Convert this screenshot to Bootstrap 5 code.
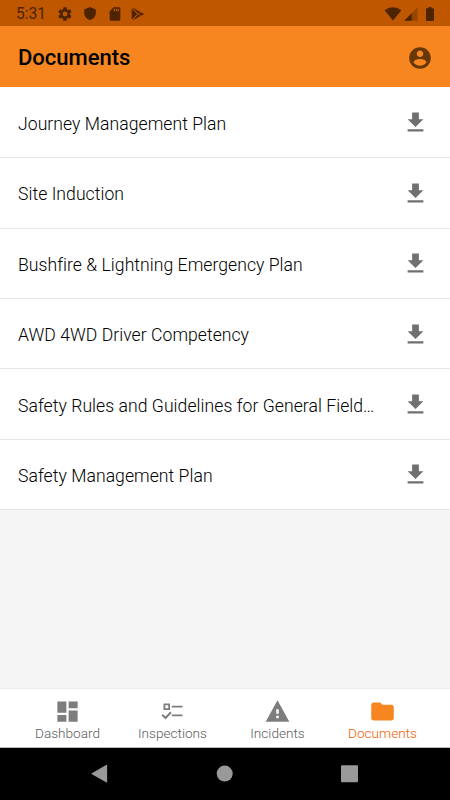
<!DOCTYPE html>
<html lang="en">
<head>
<meta charset="utf-8">
<meta name="viewport" content="width=device-width, initial-scale=1">
<title>Documents</title>
<link href="https://cdn.jsdelivr.net/npm/bootstrap@5.3.0/dist/css/bootstrap.min.css" rel="stylesheet">
<style>
body{font-family:Roboto,"Liberation Sans",sans-serif;background:#f5f5f5;color:#000}
svg{display:block;flex:none;fill:currentColor}
.status-bar{height:26px;background:#bf5600;color:#4d2300;padding:1px 16px 0 16px}
.clock{width:41px;font-size:15.6px;padding-top:2px}
.status-icons{gap:10px}
.play{margin-left:-2px}
.signal{margin:0 8px 0 2px}
.app-bar{height:61px;background:#f78620;padding:2px 17px 0 18px}
.app-title{font-size:22px;font-weight:500;line-height:24px;padding-top:1px}
.account{color:#673705}
.doc-row{height:70.4px;padding:1px 21px 0 18px;border-bottom:1px solid #e6e6e6;background:#fff}
.doc-row:first-child{height:71.2px}
.doc-name{font-size:17.6px;line-height:24px;font-weight:300;letter-spacing:.04px;color:#000;padding-top:2px}
.doc-row svg{color:#707070}
.tab-bar{height:60px;background:#fff;border-top:1px solid #ececec;border-bottom:1px solid #bdbdbd;padding:0 15px}
.tab-item{color:#7d7d7d;font-size:13.6px;line-height:16px;padding-top:9px;text-decoration:none;font-weight:300}
.tab-item span{color:#5c5c5c}
.tab-item.current{color:#f78620}
.tab-item.current span{color:#f26000}
.system-bar{height:52px;background:#000;color:#999}
</style>
<script src="https://cdn.jsdelivr.net/npm/bootstrap@5.3.0/dist/js/bootstrap.bundle.min.js"></script>
</head>
<body>
<div class="d-flex flex-column vh-100 overflow-hidden">
  <div class="status-bar d-flex align-items-center justify-content-between flex-shrink-0">
    <div class="d-flex align-items-center">
      <span class="clock">5:31</span>
      <div class="status-icons d-flex align-items-center">
      <svg width="16" height="16" viewBox="0 0 24 24"><path d="M19.400 13c.1-.7.1-1.300 0-2l2.100-1.600c.2-.2.3-.4.100-.7l-2-3.400c-.1-.2-.4-.3-.6-.2l-2.500 1c-.5-.4-1.100-.7-1.700-1l-.4-2.600c0-.2-.2-.5-.5-.5h-4c-.3 0-.5.2-.5.500L9 5.100c-.6.3-1.200.6-1.700 1l-2.500-1c-.2-.1-.5 0-.6.200l-2 3.400c-.1.300-.1.500.1.700L4.500 11c-.1.700-.1 1.300 0 2l-2.200 1.600c-.2.200-.2.400-.1.700l2 3.400c.1.200.4.300.6.200l2.500-1c.5.400 1.100.7 1.700 1l.4 2.600c0 .3.200.5.500.5h4c.3 0 .5-.2.500-.5l.4-2.600c.6-.3 1.200-.6 1.700-1l2.500 1c.2.100.5 0 .6-.2l2-3.400c.2-.3.1-.5-.1-.7zM12 15.600a3.600 3.600 0 1 1 0-7.200 3.600 3.600 0 0 1 0 7.200z"/></svg>
      <svg width="14" height="15" viewBox="0 0 24 24"><path d="M12 1 2 5v6c0 5.550 4.200 10.740 10 12 5.800-1.260 10-6.450 10-12V5z"/></svg>
      <svg width="16" height="16" viewBox="0 0 24 24"><path d="M18 2h-8L4 8v12c0 1.100.9 2 2 2h12c1.100 0 2-.9 2-2V4c0-1.100-.9-2-2-2zm-6 6h-2V4h2zm3 0h-2V4h2zm3 0h-2V4h2z"/></svg>
      <svg class="play" width="14" height="14" viewBox="0 0 14 14"><path d="M.7 1.200 6.200 7 .7 12.800zM1.600.6 9.400 4.900 7.200 6.700zM7.200 7.300 9.400 9.100 1.600 13.400zM10 5.300 13.200 7 10 8.700 7.900 7z"/></svg>
      </div>
    </div>
    <div class="d-flex align-items-center">
      <svg width="18" height="14" viewBox="0 0 18 14"><path d="M.6 3.300Q9-3 17.400 3.300L9 13.500z"/></svg>
      <svg class="signal" width="14" height="14" viewBox="0 0 14 14"><path opacity=".35" d="M.3 13.700 13.500.5v13.200z"/><path d="M.3 13.700 7.700 6.300v7.400z"/></svg>
      <svg width="8" height="14" viewBox="0 0 8 14"><path d="M2.500 0h3v1.300H7q1 0 1 1V13q0 1-1 1H1q-1 0-1-1V2.300q0-1 1-1h1.500z"/></svg>
    </div>
  </div>
  <header class="app-bar d-flex align-items-center justify-content-between flex-shrink-0">
    <h1 class="app-title mb-0">Documents</h1>
    <svg class="account" width="26" height="26" viewBox="0 0 24 24"><path d="M12 2C6.480 2 2 6.480 2 12s4.480 10 10 10 10-4.480 10-10S17.520 2 12 2zm0 3c1.660 0 3 1.340 3 3s-1.340 3-3 3-3-1.340-3-3 1.340-3 3-3zm0 14.200c-2.500 0-4.710-1.280-6-3.220.03-1.990 4-3.080 6-3.080 1.990 0 5.970 1.090 6 3.080-1.290 1.940-3.500 3.220-6 3.220z"/></svg>
  </header>
  <main class="flex-grow-1">
    <div class="doc-row d-flex align-items-center justify-content-between"><span class="doc-name text-truncate">Journey Management Plan</span><svg width="27" height="27" viewBox="0 0 24 24"><path d="M19 9h-4V3H9v6H5l7 7 7-7zM5 18v2h14v-2H5z"/></svg></div>
    <div class="doc-row d-flex align-items-center justify-content-between"><span class="doc-name text-truncate">Site Induction</span><svg width="27" height="27" viewBox="0 0 24 24"><path d="M19 9h-4V3H9v6H5l7 7 7-7zM5 18v2h14v-2H5z"/></svg></div>
    <div class="doc-row d-flex align-items-center justify-content-between"><span class="doc-name text-truncate">Bushfire &amp; Lightning Emergency Plan</span><svg width="27" height="27" viewBox="0 0 24 24"><path d="M19 9h-4V3H9v6H5l7 7 7-7zM5 18v2h14v-2H5z"/></svg></div>
    <div class="doc-row d-flex align-items-center justify-content-between"><span class="doc-name text-truncate">AWD 4WD Driver Competency</span><svg width="27" height="27" viewBox="0 0 24 24"><path d="M19 9h-4V3H9v6H5l7 7 7-7zM5 18v2h14v-2H5z"/></svg></div>
    <div class="doc-row d-flex align-items-center justify-content-between"><span class="doc-name text-truncate">Safety Rules and Guidelines for General Field…</span><svg width="27" height="27" viewBox="0 0 24 24"><path d="M19 9h-4V3H9v6H5l7 7 7-7zM5 18v2h14v-2H5z"/></svg></div>
    <div class="doc-row d-flex align-items-center justify-content-between"><span class="doc-name text-truncate">Safety Management Plan</span><svg width="27" height="27" viewBox="0 0 24 24"><path d="M19 9h-4V3H9v6H5l7 7 7-7zM5 18v2h14v-2H5z"/></svg></div>
  </main>
  <nav class="tab-bar d-flex flex-shrink-0">
    <a href="#" class="tab-item flex-fill w-25 d-flex flex-column align-items-center"><svg width="27" height="27" viewBox="0 0 24 24"><path d="M3 13h8V3H3v10zm0 8h8v-6H3v6zm10 0h8V11h-8v10zm0-18v6h8V3h-8z"/></svg><span>Dashboard</span></a>
    <a href="#" class="tab-item flex-fill w-25 d-flex flex-column align-items-center"><svg width="27" height="27" viewBox="0 0 27 27"><path fill-rule="evenodd" d="M4.500 5.500H11V12H4.500zM6.300 7.300v2.900h2.900V7.300zM12.800 7.700H23.500v1.900H12.800zM12.800 16.400H23.500v1.900H12.800z"/><path d="M3.200 16.700 6.500 20 12 14.200" fill="none" stroke="currentColor" stroke-width="2"/></svg><span>Inspections</span></a>
    <a href="#" class="tab-item flex-fill w-25 d-flex flex-column align-items-center"><svg width="27" height="27" viewBox="0 0 24 24"><path d="M1.500 21h21L12 2zM13.100 18h-2.200v-2.200h2.200zm0-4h-2.200v-4h2.200z"/></svg><span>Incidents</span></a>
    <a href="#" class="tab-item current flex-fill w-25 d-flex flex-column align-items-center"><svg width="27" height="27" viewBox="0 0 24 24"><path d="M10 4H4c-1.100 0-1.990.9-1.990 2L2 18c0 1.100.9 2 2 2h16c1.100 0 2-.9 2-2V8c0-1.100-.9-2-2-2h-8l-2-2z"/></svg><span>Documents</span></a>
  </nav>
  <div class="system-bar d-flex justify-content-center align-items-center flex-shrink-0">
    <svg width="270" height="20" viewBox="0 0 270 20"><path d="M1.500 9.600 16.500.8q.6 0 .6.600v16.800q0 .6-.6.300L1.500 10z"/><circle cx="134.700" cy="9.600" r="8"/><rect x="251" y="1.200" width="17" height="17" rx="1"/></svg>
  </div>
</div>
</body>
</html>
